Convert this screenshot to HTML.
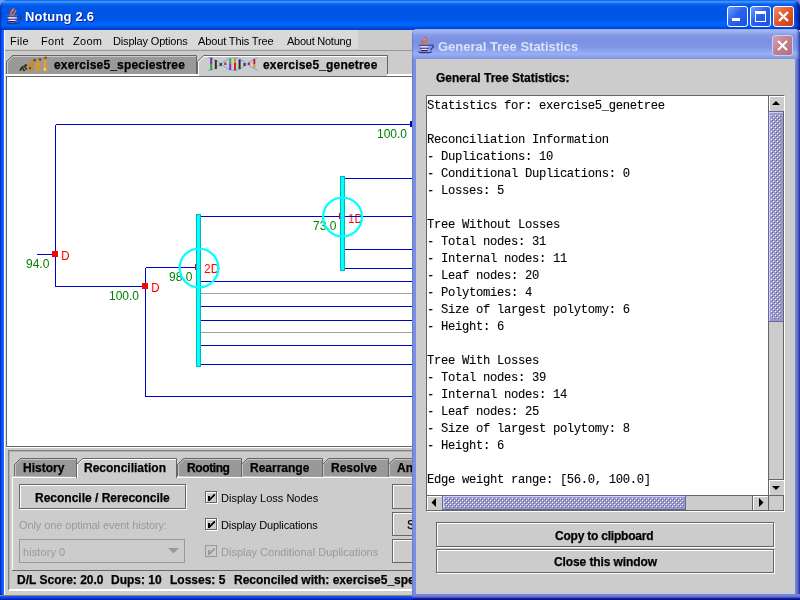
<!DOCTYPE html>
<html><head><meta charset="utf-8">
<style>
*{margin:0;padding:0;box-sizing:border-box}
html,body{width:800px;height:600px;overflow:hidden;background:#cccccc;font-family:"Liberation Sans",sans-serif;position:relative}
.a{position:absolute}
.t{position:absolute;white-space:pre;line-height:1;will-change:transform}
#title{left:0;top:0;width:800px;height:30px;border-radius:7px 7px 0 0;
 background:linear-gradient(90deg,rgba(0,20,150,0.7) 0,rgba(0,20,150,0) 2px,rgba(0,20,150,0) 794px,rgba(0,24,150,0.55) 797px,rgba(0,16,120,0.9) 800px),linear-gradient(#0047e0 0px,#3b8fff 1px,#3d95ff 2px,#0a64f0 4px,#0058e8 6px,#0054e3 14px,#0058ea 20px,#0066ff 23px,#0062f8 26px,#0046d8 28px,#0040cc 30px)}
.menu{font-size:11px;color:#000;top:36px}
.bold12{font-weight:bold;font-size:12px;color:#000;-webkit-text-stroke:0.25px #000}
.thumb{background-color:#ccccff;background-image:radial-gradient(circle at 1px 1px,#fff 0.7px,transparent 0.8px),radial-gradient(circle at 3px 3px,#fff 0.7px,transparent 0.8px),radial-gradient(circle at 2px 2px,#9999cc 0.7px,transparent 0.8px),radial-gradient(circle at 4px 4px,#9999cc 0.7px,transparent 0.8px);background-size:4px 4px;border:1px solid #666699}
.mono{font-family:"Liberation Mono",monospace;font-size:12.2px;letter-spacing:-0.32px;color:#000;-webkit-text-stroke:0.1px #000}
</style></head><body>
<!-- window frame -->
<div class="a" style="left:0;top:0;width:4px;height:600px;background:linear-gradient(90deg,#0018c8,#0a4ff0 40%,#1060ff 75%,#2c78ff)"></div>
<div class="a" style="left:0;top:595px;width:800px;height:5px;background:linear-gradient(#8a8070 0,#8a8070 1px,#1a5cf8 1px,#0a3fe0 3px,#001aa0 5px)"></div>
<div class="a" style="left:4px;top:30px;width:1px;height:565px;background:#fff"></div>
<div class="a" style="left:0;top:0;width:10px;height:10px;background:#6c9cf6"></div>
<div class="a" style="left:790px;top:0;width:10px;height:10px;background:#6a80e6"></div>
<div id="title" class="a"></div>
<!-- java cup -->
<svg class="a" style="left:4px;top:5px" width="20" height="20" viewBox="0 0 20 20">
 <path d="M9.8 2.8 Q9.6 5 7.6 6.4 Q6 7.8 6.6 9.2 L8.2 10.8" stroke="#e0582a" stroke-width="1.8" fill="none"/><path d="M9.4 4 L7.6 6.6 M7 8.4 L8 9.6" stroke="#ffc090" stroke-width="0.7" fill="none"/>
 <path d="M11.8 5 Q11.4 7.4 10 8.4 Q9 9.4 9.2 10.8" stroke="#e8702e" stroke-width="1.5" fill="none"/>
 <path d="M3 10.5 H13.5 L12.2 16.2 Q11 17.6 8.5 17.6 Q6 17.6 4.6 16.2 Z" fill="#b8b0f0"/>
 <path d="M3 11.2 H13.5 M3.8 14.3 H12.8 M5 16.6 H11.8" stroke="#2a2468" stroke-width="1.1"/>
 <path d="M5 12.8 H11.5 M6 15.4 H11" stroke="#f4f0ff" stroke-width="0.9"/>
 <path d="M13.2 11.3 Q18.2 10.2 17.2 13 L14.2 16.2" stroke="#3a3078" stroke-width="1.2" fill="none"/>
 <path d="M2.6 17.4 Q3 18.6 5 18.6 H13 Q15.4 18.6 15.8 17.4" stroke="#3a3078" stroke-width="1.2" fill="none"/>
</svg>
<div class="t" style="left:25px;top:10px;color:#fff;font-weight:bold;font-size:13px;letter-spacing:0.2px;text-shadow:1px 1px 0 #0a1c8c">Notung 2.6</div>
<!-- title buttons -->
<div class="a" style="left:727px;top:6px;width:21px;height:21px;border:1px solid #fff;border-radius:3px;background:linear-gradient(135deg,#6e9cff,#2a62f0 45%,#1a50e0)"></div>
<div class="a" style="left:732px;top:18px;width:8px;height:3px;background:#fff"></div>
<div class="a" style="left:750px;top:6px;width:21px;height:21px;border:1px solid #fff;border-radius:3px;background:linear-gradient(135deg,#6e9cff,#2a62f0 45%,#1a50e0)"></div>
<div class="a" style="left:755px;top:11px;width:11px;height:11px;border:1px solid #fff;border-top-width:3px"></div>
<div class="a" style="left:773px;top:6px;width:21px;height:21px;border:1px solid #fff;border-radius:3px;background:linear-gradient(135deg,#f09070,#e05a30 45%,#c83c10)"></div>
<svg class="a" style="left:773px;top:6px" width="21" height="21"><path d="M6 6 L15 15 M15 6 L6 15" stroke="#fff" stroke-width="2.3"/></svg>

<!-- menu bar -->
<div class="a" style="left:5px;top:30px;width:353px;height:19px;background:#d9d9d9"></div>
<div class="a" style="left:5px;top:50px;width:791px;height:1px;background:#999"></div>
<div class="t menu" style="left:10px;letter-spacing:0.3px">File</div>
<div class="t menu" style="left:41px;letter-spacing:0.3px">Font</div>
<div class="t menu" style="left:73px;letter-spacing:0.3px">Zoom</div>
<div class="t menu" style="left:113px;letter-spacing:-0.17px">Display Options</div>
<div class="t menu" style="left:198px;letter-spacing:-0.13px">About This Tree</div>
<div class="t menu" style="left:287px;letter-spacing:-0.25px">About Notung</div>

<!-- top tabs -->
<svg class="a" style="left:0;top:50px" width="420" height="30">
 <path d="M6.5 26.5 L6.5 11.5 L12.5 5.5 L196.5 5.5 L196.5 26.5" fill="#999999" stroke="#666" stroke-width="1"/>
 <polyline points="7.5,24 7.5,12 13,6.5 196,6.5" fill="none" stroke="#c8c8c8" stroke-width="1"/>
 <path d="M197.5 26.5 L197.5 11.5 L203.5 5.5 L387.5 5.5 L387.5 26.5" fill="#cccccc" stroke="#666" stroke-width="1"/>
 <polyline points="198.5,25 198.5,12 204,6.5 387,6.5" fill="none" stroke="#fff" stroke-width="1"/>
 <rect x="4" y="24" width="416" height="2" fill="#fff"/>
 <rect x="199" y="24" width="188" height="2" fill="#cccccc"/>
</svg>
<!-- evolution icon -->
<svg class="a" style="left:16px;top:54px" width="36" height="20" viewBox="0 0 36 20">
 <circle cx="9.8" cy="11.2" r="1.3" fill="#3a3a18"/>
 <path d="M4 16.8 L5.5 13.8 Q7 12 9 12.2 M6 13.5 L8.5 17 M9 12.5 L10.5 15.8" stroke="#283010" stroke-width="1.6" fill="none"/>
 <circle cx="18.6" cy="6.2" r="1.4" fill="#6a4a10"/>
 <path d="M17.6 7.2 Q14.5 8 14.2 11 L14 13.5 L13.5 17 M14.5 13 L16.5 17 M16.5 9 L18 12" stroke="#d08a1e" stroke-width="2.2" fill="none"/>
 <path d="M14 13 L14 15" stroke="#3a2a10" stroke-width="1.5"/>
 <circle cx="24" cy="5.6" r="1.4" fill="#7a4a10"/>
 <path d="M23.4 6.8 Q21 8 21 11 L20.8 13.5 L20 17 M21.5 13 L23.2 17 M22.5 9.5 L24.5 11.5" stroke="#e09628" stroke-width="2.2" fill="none"/>
 <circle cx="29.6" cy="4" r="1.4" fill="#8a5a14"/>
 <path d="M29.4 5.5 L29 10 L28.6 13.5 L28.2 17 M29.4 13 L30.6 17" stroke="#e8a030" stroke-width="2.3" fill="none"/>
 <path d="M28.8 14 L28.8 16.5" stroke="#fff0c0" stroke-width="1.2"/>
</svg>
<div class="t bold12" style="left:54px;top:59px;letter-spacing:0.17px">exercise5_speciestree</div>
<!-- DNA icon -->
<svg class="a" style="left:205px;top:54px" width="56" height="20" viewBox="0 0 56 20">
 <polyline points="3.0,16.30 3.5,16.29 4.0,16.25 4.5,16.20 5.0,16.12 5.5,16.01 6.0,15.89 6.5,15.74 7.0,15.58 7.5,15.39 8.0,15.18 8.5,14.96 9.0,14.72 9.5,14.45 10.0,14.18 10.5,13.89 11.0,13.58 11.5,13.26 12.0,12.93 12.5,12.59 13.0,12.23 13.5,11.87 14.0,11.51 14.5,11.14 15.0,10.76 15.5,10.38 16.0,10.00 16.5,9.62 17.0,9.24 17.5,8.86 18.0,8.49 18.5,8.13 19.0,7.77 19.5,7.41 20.0,7.07 20.5,6.74 21.0,6.42 21.5,6.11 22.0,5.82 22.5,5.55 23.0,5.28 23.5,5.04 24.0,4.82 24.5,4.61 25.0,4.42 25.5,4.26 26.0,4.11 26.5,3.99 27.0,3.88 27.5,3.80 28.0,3.75 28.5,3.71 29.0,3.70 29.5,3.71 30.0,3.75 30.5,3.80 31.0,3.88 31.5,3.99 32.0,4.11 32.5,4.26 33.0,4.42 33.5,4.61 34.0,4.82 34.5,5.04 35.0,5.28 35.5,5.55 36.0,5.82 36.5,6.11 37.0,6.42 37.5,6.74 38.0,7.07 38.5,7.41 39.0,7.77 39.5,8.13 40.0,8.49 40.5,8.86 41.0,9.24 41.5,9.62 42.0,10.00 42.5,10.38 43.0,10.76 43.5,11.14 44.0,11.51 44.5,11.87 45.0,12.23 45.5,12.59 46.0,12.93 46.5,13.26 47.0,13.58 47.5,13.89 48.0,14.18 48.5,14.45 49.0,14.72 49.5,14.96 50.0,15.18 50.5,15.39 51.0,15.58 51.5,15.74 52.0,15.89 52.5,16.01 53.0,16.12" stroke="#78b8f0" stroke-width="1.2" fill="none"/>
 <polyline points="3.0,3.70 3.5,3.71 4.0,3.75 4.5,3.80 5.0,3.88 5.5,3.99 6.0,4.11 6.5,4.26 7.0,4.42 7.5,4.61 8.0,4.82 8.5,5.04 9.0,5.28 9.5,5.55 10.0,5.82 10.5,6.11 11.0,6.42 11.5,6.74 12.0,7.07 12.5,7.41 13.0,7.77 13.5,8.13 14.0,8.49 14.5,8.86 15.0,9.24 15.5,9.62 16.0,10.00 16.5,10.38 17.0,10.76 17.5,11.14 18.0,11.51 18.5,11.87 19.0,12.23 19.5,12.59 20.0,12.93 20.5,13.26 21.0,13.58 21.5,13.89 22.0,14.18 22.5,14.45 23.0,14.72 23.5,14.96 24.0,15.18 24.5,15.39 25.0,15.58 25.5,15.74 26.0,15.89 26.5,16.01 27.0,16.12 27.5,16.20 28.0,16.25 28.5,16.29 29.0,16.30 29.5,16.29 30.0,16.25 30.5,16.20 31.0,16.12 31.5,16.01 32.0,15.89 32.5,15.74 33.0,15.58 33.5,15.39 34.0,15.18 34.5,14.96 35.0,14.72 35.5,14.45 36.0,14.18 36.5,13.89 37.0,13.58 37.5,13.26 38.0,12.93 38.5,12.59 39.0,12.23 39.5,11.87 40.0,11.51 40.5,11.14 41.0,10.76 41.5,10.38 42.0,10.00 42.5,9.62 43.0,9.24 43.5,8.86 44.0,8.49 44.5,8.13 45.0,7.77 45.5,7.41 46.0,7.07 46.5,6.74 47.0,6.42 47.5,6.11 48.0,5.82 48.5,5.55 49.0,5.28 49.5,5.04 50.0,4.82 50.5,4.61 51.0,4.42 51.5,4.26 52.0,4.11 52.5,3.99 53.0,3.88" stroke="#78b8f0" stroke-width="1.2" fill="none"/>
 <rect x="5.2" y="3.5" width="2" height="6.5" fill="#7030a0"/><rect x="5.2" y="10" width="2" height="6.199999999999999" fill="#30a030"/><rect x="9.8" y="6" width="2" height="9" fill="#5a2010"/><rect x="14.7" y="9" width="2" height="3" fill="#204010"/><rect x="19.3" y="8.5" width="2" height="2.5" fill="#d02020"/><rect x="24.2" y="4.5" width="2" height="5.0" fill="#30b030"/><rect x="24.2" y="9.5" width="2" height="6.5" fill="#8030c0"/><rect x="29.0" y="4" width="2" height="5" fill="#e08a10"/><rect x="29.0" y="9" width="2" height="7.5" fill="#d02020"/><rect x="33.6" y="5.5" width="2" height="4.5" fill="#302060"/><rect x="33.6" y="10" width="2" height="5" fill="#204010"/><rect x="38.5" y="9" width="2" height="3" fill="#801818"/><rect x="43.0" y="8.5" width="2" height="2.5" fill="#d02020"/><rect x="48.3" y="5" width="2" height="5" fill="#d02020"/><rect x="48.3" y="10" width="2" height="4" fill="#e09020"/>
</svg>
<div class="t bold12" style="left:263px;top:59px;letter-spacing:0.17px">exercise5_genetree</div>

<!-- canvas -->
<div class="a" style="left:5px;top:74px;width:1px;height:376px;background:#ddd"></div>
<div class="a" style="left:6px;top:76px;width:410px;height:371px;background:#fff;border-left:1px solid #666;border-top:1px solid #666;border-bottom:1px solid #666"></div>
<div class="t" style="left:61px;top:249px;color:#f00;font-size:13.5px;transform:scaleX(0.88);transform-origin:0 0">D</div>
<div class="t" style="left:150.5px;top:281px;color:#f00;font-size:13.5px;transform:scaleX(0.88);transform-origin:0 0">D</div>
<div class="t" style="left:203.5px;top:262px;color:#f00;font-size:13.5px;transform:scaleX(0.9);transform-origin:0 0">2D</div>
<div class="t" style="left:348px;top:212px;color:#f00;font-size:13.5px;transform:scaleX(0.86);transform-origin:0 0">1D</div>
<div class="t" style="left:26px;top:258px;color:#008000;font-size:12px">94.0</div>
<div class="t" style="left:109px;top:290px;color:#008000;font-size:12px">100.0</div>
<div class="t" style="left:377px;top:128px;color:#008000;font-size:12px">100.0</div>
<div class="t" style="left:169px;top:271px;color:#008000;font-size:12px">98.0</div>
<div class="t" style="left:313px;top:220px;color:#008000;font-size:12px">73.0</div>
<svg class="a" style="left:0;top:0" width="412" height="446">
 <g stroke="#0000cc" stroke-width="1" fill="none" shape-rendering="crispEdges">
  <path d="M55.5 124.5 H412 M55.5 124.5 V286.5 H145.5 M37 254.5 H55.5 M145.5 267.5 V396.5 H412 M145.5 267.5 H199"/>
  <path d="M201 216.5 H412 M201 281.5 H412 M201 306.5 H412 M201 320.5 H412 M201 345.5 H412 M201 364.5 H412"/>
  <path d="M201 216.5 H341 M345 178.5 H412 M345 249.5 H412 M345 268.5 H412"/>
 </g>
 <g stroke="#a0a0a0" stroke-width="1" shape-rendering="crispEdges">
  <path d="M201 293.5 H412 M201 332.5 H412"/>
 </g>
 <rect x="410" y="121" width="2" height="6" fill="#0000cc"/>
 <rect x="52" y="251" width="6" height="6" fill="#ff0000"/>
 <rect x="142" y="283" width="6" height="6" fill="#ff0000"/>
 <rect x="195" y="264" width="2" height="6" fill="#ff0000"/>
 <rect x="339" y="213" width="2" height="6" fill="#ff0000"/>
 <rect x="196.5" y="214.5" width="4" height="152" fill="#00ffff" stroke="#00b8b8" stroke-width="1"/>
 <rect x="340.5" y="176.5" width="4" height="94" fill="#00ffff" stroke="#00b8b8" stroke-width="1"/>
</svg>
<svg class="a" style="left:0;top:0" width="412" height="446"><circle cx="199" cy="268" r="19.4" fill="none" stroke="#00ffff" stroke-width="2.3"/><circle cx="342.5" cy="217" r="19.4" fill="none" stroke="#00ffff" stroke-width="2.3"/></svg>


<!-- bottom panel -->
<div class="a" style="left:6px;top:447px;width:410px;height:1px;background:#fff"></div>
<div class="a" style="left:8px;top:450px;width:410px;height:140px;border-left:1px solid #808080;border-top:1px solid #808080"></div>
<div class="a" style="left:9px;top:451px;width:410px;height:138px;border-left:1px solid #b0b0b0;border-top:1px solid #b0b0b0"></div>
<div class="a" style="left:9px;top:589px;width:410px;height:2px;background:#fff"></div>
<svg class="a" style="left:0;top:450px" width="412" height="130">
 <path d="M14.5 26 L14.5 14.5 L20.5 8.5 L76.5 8.5 L76.5 27" fill="#999999" stroke="#666" stroke-width="1"/>
 <polyline points="15.5,26 15.5,15 21,9.5 76,9.5" fill="none" stroke="#c8c8c8" stroke-width="1"/>
 <path d="M177.5 26 L177.5 14.5 L183.5 8.5 L241.5 8.5 L241.5 27" fill="#999999" stroke="#666" stroke-width="1"/>
 <polyline points="178.5,26 178.5,15 184,9.5 241,9.5" fill="none" stroke="#c8c8c8" stroke-width="1"/>
 <path d="M241.5 26 L241.5 14.5 L247.5 8.5 L322.5 8.5 L322.5 27" fill="#999999" stroke="#666" stroke-width="1"/>
 <polyline points="242.5,26 242.5,15 248,9.5 322,9.5" fill="none" stroke="#c8c8c8" stroke-width="1"/>
 <path d="M322.5 26 L322.5 14.5 L328.5 8.5 L388.5 8.5 L388.5 27" fill="#999999" stroke="#666" stroke-width="1"/>
 <polyline points="323.5,26 323.5,15 329,9.5 388,9.5" fill="none" stroke="#c8c8c8" stroke-width="1"/>
 <path d="M388.5 26 L388.5 14.5 L394.5 8.5 L420 8.5 L420 27" fill="#999999" stroke="#666" stroke-width="1"/>
 <polyline points="389.5,26 389.5,15 395,9.5 420,9.5" fill="none" stroke="#c8c8c8" stroke-width="1"/>
 <rect x="12" y="27" width="400" height="1" fill="#fff"/>
 <path d="M76.5 28 L76.5 14.5 L82.5 8.5 L176.5 8.5 L176.5 28" fill="#cccccc" stroke="#666" stroke-width="1"/>
 <polyline points="77.5,28 77.5,15 83,9.5 176,9.5" fill="none" stroke="#fff" stroke-width="1"/>
 <rect x="12" y="28" width="1" height="92" fill="#fff"/>
 <rect x="12" y="120" width="400" height="1" fill="#666"/>
</svg>
<div class="t bold12" style="left:23px;top:462px">History</div>
<div class="t bold12" style="left:84px;top:462px">Reconciliation</div>
<div class="t bold12" style="left:187px;top:462px;letter-spacing:-0.4px">Rooting</div>
<div class="t bold12" style="left:250px;top:462px">Rearrange</div>
<div class="t bold12" style="left:331px;top:462px">Resolve</div>
<div class="t bold12" style="left:397px;top:462px">An</div>
<!-- reconcile button -->
<div class="a" style="left:19px;top:484px;width:167px;height:25px;border:1px solid #666;box-shadow:inset 1px 1px 0 #fff, 1px 1px 0 #fff"></div>
<div class="t bold12" style="left:35px;top:492px">Reconcile / Rereconcile</div>
<div class="t" style="left:19px;top:520px;font-size:11px;color:#999;letter-spacing:-0.1px">Only one optimal event history:</div>
<div class="a" style="left:19px;top:539px;width:166px;height:24px;border:1px solid #999"></div>
<div class="t" style="left:22.5px;top:547px;font-size:11px;color:#999;letter-spacing:0.08px">history 0</div>
<svg class="a" style="left:168px;top:548px" width="12" height="6"><polygon points="0,0 11,0 5.5,5.5" fill="#999"/></svg>
<!-- checkboxes -->
<svg class="a" style="left:203px;top:489px" width="18" height="18" shape-rendering="crispEdges">
 <rect x="3.5" y="3.5" width="11" height="11" fill="none" stroke="#fff" stroke-width="1"/>
 <rect x="2.5" y="2.5" width="11" height="11" fill="none" stroke="#666" stroke-width="1"/>
 <path d="M5 7 H7 V9 L11 5 H12 V6.5 L7 11.5 V12 H5 Z" fill="#000" shape-rendering="auto"/>
</svg>
<div class="t" style="left:221px;top:493px;font-size:11px">Display Loss Nodes</div>
<svg class="a" style="left:203px;top:516px" width="18" height="18" shape-rendering="crispEdges">
 <rect x="3.5" y="3.5" width="11" height="11" fill="none" stroke="#fff" stroke-width="1"/>
 <rect x="2.5" y="2.5" width="11" height="11" fill="none" stroke="#666" stroke-width="1"/>
 <path d="M5 7 H7 V9 L11 5 H12 V6.5 L7 11.5 V12 H5 Z" fill="#000" shape-rendering="auto"/>
</svg>
<div class="t" style="left:221px;top:520px;font-size:11px;letter-spacing:-0.12px">Display Duplications</div>
<svg class="a" style="left:203px;top:543px" width="18" height="18" shape-rendering="crispEdges">
 <rect x="3.5" y="3.5" width="11" height="11" fill="none" stroke="#cccccc" stroke-width="1"/>
 <rect x="2.5" y="2.5" width="11" height="11" fill="none" stroke="#999" stroke-width="1"/>
 <path d="M5 7 H7 V9 L11 5 H12 V6.5 L7 11.5 V12 H5 Z" fill="#999" shape-rendering="auto"/>
</svg>
<div class="t" style="left:221px;top:547px;font-size:11px;color:#999">Display Conditional Duplications</div>
<!-- right buttons -->
<div class="a" style="left:392px;top:484px;width:30px;height:25px;border:1px solid #666;box-shadow:inset 1px 1px 0 #fff"></div>
<div class="a" style="left:392px;top:512px;width:30px;height:24px;border:1px solid #666;box-shadow:inset 1px 1px 0 #fff"></div>
<div class="t bold12" style="left:407px;top:519px;font-weight:normal">S</div>
<div class="a" style="left:392px;top:539px;width:30px;height:24px;border:1px solid #666;box-shadow:inset 1px 1px 0 #fff"></div>
<!-- status -->
<div class="t bold12" style="left:17px;top:574px">D/L Score: 20.0</div>
<div class="t bold12" style="left:111px;top:574px">Dups: 10</div>
<div class="t bold12" style="left:170px;top:574px">Losses: 5</div>
<div class="t bold12" style="left:234px;top:574px">Reconciled with: exercise5_spe</div>
<!-- dialog -->
<div class="a" style="left:412px;top:29px;width:388px;height:571px;border-radius:5px 5px 0 0;background:linear-gradient(90deg,#6070d0 0,#7b8fe0 1.5px,#7b8fe0 383px,#7284dc 384px,#6676d0 385px,#5262c0 386px,#3a48b0 387px,#2030a0 388px)"></div>
<div class="a" style="left:412px;top:594px;width:388px;height:6px;background:linear-gradient(#7284de 0,#7080dc 2px,#5a66c8 3px,#3038a8 4px,#001090 5px)"></div>
<div class="a" style="left:412px;top:29px;width:388px;height:30px;border-radius:5px 5px 0 0;background:linear-gradient(90deg,rgba(60,70,190,0.5) 0,rgba(60,70,190,0) 1.5px,rgba(60,70,190,0) 384px,rgba(50,60,170,0.4) 386px,rgba(30,40,150,0.85) 388px),linear-gradient(#8ea0e8 0,#a4b8f4 1px,#9cb0f0 3px,#8599e6 6px,#7b90e2 12px,#7f96e6 18px,#8ca4ee 22px,#98b0f2 25px,#8aa0ea 28px,#7b8fe0 30px)"></div>
<div class="a" style="left:416px;top:59px;width:379px;height:535px;background:#cccccc"></div>
<svg class="a" style="left:416px;top:34px" width="20" height="20" viewBox="0 0 20 20">
 <path d="M9.8 2.8 Q9.6 5 7.6 6.4 Q6 7.8 6.6 9.2 L8.2 10.8" stroke="#e0582a" stroke-width="1.8" fill="none"/><path d="M9.4 4 L7.6 6.6 M7 8.4 L8 9.6" stroke="#ffc090" stroke-width="0.7" fill="none"/>
 <path d="M11.8 5 Q11.4 7.4 10 8.4 Q9 9.4 9.2 10.8" stroke="#e8702e" stroke-width="1.5" fill="none"/>
 <path d="M3 10.5 H13.5 L12.2 16.2 Q11 17.6 8.5 17.6 Q6 17.6 4.6 16.2 Z" fill="#b8b0f0"/>
 <path d="M3 11.2 H13.5 M3.8 14.3 H12.8 M5 16.6 H11.8" stroke="#2a2468" stroke-width="1.1"/>
 <path d="M5 12.8 H11.5 M6 15.4 H11" stroke="#f4f0ff" stroke-width="0.9"/>
 <path d="M13.2 11.3 Q18.2 10.2 17.2 13 L14.2 16.2" stroke="#3a3078" stroke-width="1.2" fill="none"/>
 <path d="M2.6 17.4 Q3 18.6 5 18.6 H13 Q15.4 18.6 15.8 17.4" stroke="#3a3078" stroke-width="1.2" fill="none"/>
</svg>
<div class="t" style="left:438px;top:40px;color:#d8e2fa;font-weight:bold;font-size:13px">General Tree Statistics</div>
<div class="a" style="left:772px;top:35px;width:21px;height:21px;border:1px solid #c8d0f4;border-radius:3px;background:linear-gradient(135deg,#d8a0b0,#c08090 50%,#b07080)"></div>
<svg class="a" style="left:772px;top:35px" width="21" height="21"><path d="M6 6 L15 15 M15 6 L6 15" stroke="#fff" stroke-width="2"/></svg>
<div class="t bold12" style="left:436px;top:72px">General Tree Statistics:</div>
<!-- text area -->
<div class="a" style="left:426px;top:95px;width:359px;height:417px;border:1px solid #666;border-right-color:#fff;border-bottom-color:#fff;box-shadow:inset -1px -1px 0 #666"></div>
<div class="a" style="left:427px;top:96px;width:341px;height:399px;background:#fff"></div>
<div class="t mono" style="left:427px;top:98px;line-height:17px">Statistics for: exercise5_genetree

Reconciliation Information
- Duplications: 10
- Conditional Duplications: 0
- Losses: 5

Tree Without Losses
- Total nodes: 31
- Internal nodes: 11
- Leaf nodes: 20
- Polytomies: 4
- Size of largest polytomy: 6
- Height: 6

Tree With Losses
- Total nodes: 39
- Internal nodes: 14
- Leaf nodes: 25
- Size of largest polytomy: 8
- Height: 6

Edge weight range: [56.0, 100.0]</div>
<!-- vertical scrollbar -->
<div class="a" style="left:768px;top:96px;width:15px;height:399px;background:#ccc;border-left:1px solid #666"></div>
<div class="a" style="left:768px;top:96px;width:16px;height:15px;border-left:1px solid #666;box-shadow:inset 1px 1px 0 #fff;background:#ccc"></div>
<svg class="a" style="left:771px;top:100px" width="10" height="6"><polygon points="1,5 9,5 5,1" fill="#000"/></svg>
<svg class="a" style="left:768px;top:111px" width="15" height="211" shape-rendering="crispEdges">
 <defs><pattern id="bump" x="3" y="4" width="4" height="4" patternUnits="userSpaceOnUse">
  <rect x="0" y="0" width="1" height="1" fill="#fff"/><rect x="2" y="2" width="1" height="1" fill="#fff"/>
  <rect x="1" y="1" width="1" height="1" fill="#666699"/><rect x="3" y="3" width="1" height="1" fill="#666699"/>
 </pattern>
 <pattern id="bumph" x="2" y="3" width="4" height="4" patternUnits="userSpaceOnUse">
  <rect x="0" y="0" width="1" height="1" fill="#fff"/><rect x="2" y="2" width="1" height="1" fill="#fff"/>
  <rect x="1" y="1" width="1" height="1" fill="#666699"/><rect x="3" y="3" width="1" height="1" fill="#666699"/>
 </pattern></defs>
 <rect x="0" y="0" width="15" height="211" fill="#666699"/>
 <rect x="1" y="1" width="14" height="209" fill="#ccccff"/>
 <rect x="2" y="2" width="13" height="208" fill="#9999cc"/>
 <rect x="3" y="4" width="10" height="204" fill="url(#bump)"/>
</svg>
<div class="a" style="left:768px;top:479px;width:16px;height:16px;border-left:1px solid #666;border-top:1px solid #666;box-shadow:inset 1px 1px 0 #fff;background:#ccc"></div>
<svg class="a" style="left:771px;top:485px" width="10" height="6"><polygon points="1,1 9,1 5,5" fill="#000"/></svg>
<!-- horizontal scrollbar -->
<div class="a" style="left:427px;top:495px;width:341px;height:15px;background:#ccc;border-top:1px solid #666"></div>
<div class="a" style="left:427px;top:495px;width:16px;height:15px;border-top:1px solid #666;border-right:1px solid #666;box-shadow:inset 1px 1px 0 #fff;background:#ccc"></div>
<svg class="a" style="left:430px;top:497px" width="8" height="12"><polygon points="6,1 6,10 1.5,5.5" fill="#000"/></svg>
<svg class="a" style="left:442px;top:495px" width="245" height="15" shape-rendering="crispEdges">
 <rect x="0" y="0" width="244" height="15" fill="#666699"/>
 <rect x="1" y="1" width="242" height="13" fill="#ccccff"/>
 <rect x="2" y="2" width="241" height="12" fill="#9999cc"/>
 <rect x="2" y="3" width="240" height="10" fill="url(#bumph)"/>
</svg>
<div class="a" style="left:752px;top:495px;width:16px;height:15px;border-top:1px solid #666;border-left:1px solid #666;box-shadow:inset 1px 1px 0 #fff;background:#ccc"></div>
<svg class="a" style="left:757px;top:497px" width="8" height="12"><polygon points="2,1 2,10 6.5,5.5" fill="#000"/></svg>
<div class="a" style="left:768px;top:495px;width:15px;height:15px;background:#ccc;border-top:1px solid #666;border-left:1px solid #666"></div>
<!-- buttons -->
<div class="a" style="left:436px;top:522px;width:338px;height:25px;border:1px solid #666;box-shadow:inset 1px 1px 0 #fff, 1px 1px 0 #fff"></div>
<div class="t bold12" style="left:555px;top:530px;letter-spacing:-0.22px">Copy to clipboard</div>
<div class="a" style="left:436px;top:549px;width:338px;height:24px;border:1px solid #666;box-shadow:inset 1px 1px 0 #fff, 1px 1px 0 #fff"></div>
<div class="t bold12" style="left:554px;top:556px;letter-spacing:-0.1px">Close this window</div>
</body></html>
